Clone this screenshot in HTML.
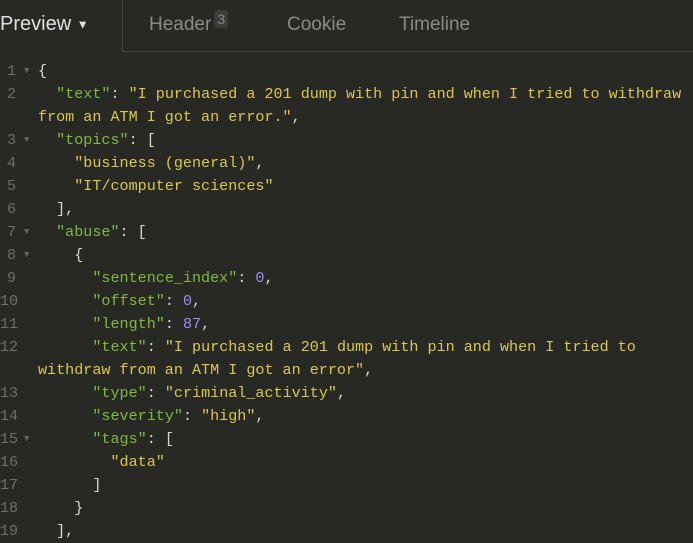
<!DOCTYPE html>
<html><head><meta charset="utf-8"><style>
html,body{margin:0;padding:0;width:693px;height:543px;overflow:hidden;background:#282824;}
.hdr{position:absolute;left:0;top:0;width:693px;height:52px;font-family:"Liberation Sans",sans-serif;font-size:19px;}
.hdr .line{position:absolute;left:122px;top:0;width:1px;height:52px;background:#444;}
.hdr .bot{position:absolute;left:122px;top:51px;width:571px;height:1px;background:#444;}
.tab{position:absolute;top:14px;color:#8a8a88;white-space:nowrap;}
.badge{display:inline-block;background:#3c3c3a;color:#888;font-size:14px;padding:1px 3px;border-radius:3px;vertical-align:top;margin-left:3px;margin-top:-4px;}
.code{position:absolute;left:0;top:60px;font-family:"Liberation Mono",monospace;font-size:15.1px;line-height:23px;color:#d8d8d0;}
.r{position:relative;height:23px;}
.n{position:absolute;left:0;width:16px;text-align:right;color:#6e6e6a;}
.a{position:absolute;left:24px;color:#666;font-size:9px;}
.t{position:absolute;left:38px;white-space:pre;}
.k{color:#82b83c}.s{color:#d9c94c}.m{color:#9d8ff0}
</style></head><body>
<div class="hdr">
<div class="tab" style="left:0;color:#e0e0e0;font-size:20px;top:13px">Preview <span style="font-size:12px;vertical-align:middle">▼</span></div>
<div class="line"></div><div class="bot"></div>
<div class="tab" style="left:149px">Header<span class="badge">3</span></div>
<div class="tab" style="left:287px">Cookie</div>
<div class="tab" style="left:399px">Timeline</div>
</div>
<div class="code">
<div class="r"><span class="n">1</span><span class="a">▼</span><span class="t">{</span></div>
<div class="r"><span class="n">2</span><span class="t">  <span class="k">"text"</span>: <span class="s">"I purchased a 201 dump with pin and when I tried to withdraw</span></span></div>
<div class="r"><span class="t"><span class="s">from an ATM I got an error."</span>,</span></div>
<div class="r"><span class="n">3</span><span class="a">▼</span><span class="t">  <span class="k">"topics"</span>: [</span></div>
<div class="r"><span class="n">4</span><span class="t">    <span class="s">"business (general)"</span>,</span></div>
<div class="r"><span class="n">5</span><span class="t">    <span class="s">"IT/computer sciences"</span></span></div>
<div class="r"><span class="n">6</span><span class="t">  ],</span></div>
<div class="r"><span class="n">7</span><span class="a">▼</span><span class="t">  <span class="k">"abuse"</span>: [</span></div>
<div class="r"><span class="n">8</span><span class="a">▼</span><span class="t">    {</span></div>
<div class="r"><span class="n">9</span><span class="t">      <span class="k">"sentence_index"</span>: <span class="m">0</span>,</span></div>
<div class="r"><span class="n">10</span><span class="t">      <span class="k">"offset"</span>: <span class="m">0</span>,</span></div>
<div class="r"><span class="n">11</span><span class="t">      <span class="k">"length"</span>: <span class="m">87</span>,</span></div>
<div class="r"><span class="n">12</span><span class="t">      <span class="k">"text"</span>: <span class="s">"I purchased a 201 dump with pin and when I tried to</span></span></div>
<div class="r"><span class="t"><span class="s">withdraw from an ATM I got an error"</span>,</span></div>
<div class="r"><span class="n">13</span><span class="t">      <span class="k">"type"</span>: <span class="s">"criminal_activity"</span>,</span></div>
<div class="r"><span class="n">14</span><span class="t">      <span class="k">"severity"</span>: <span class="s">"high"</span>,</span></div>
<div class="r"><span class="n">15</span><span class="a">▼</span><span class="t">      <span class="k">"tags"</span>: [</span></div>
<div class="r"><span class="n">16</span><span class="t">        <span class="s">"data"</span></span></div>
<div class="r"><span class="n">17</span><span class="t">      ]</span></div>
<div class="r"><span class="n">18</span><span class="t">    }</span></div>
<div class="r"><span class="n">19</span><span class="t">  ],</span></div>
</div>
</body></html>
